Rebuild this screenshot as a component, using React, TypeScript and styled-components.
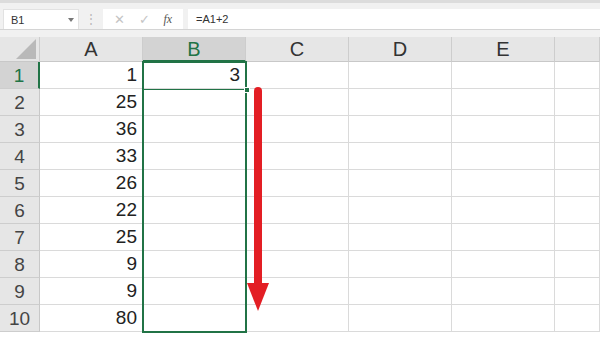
import React from 'react';
import styled, { createGlobalStyle } from 'styled-components';

const GREEN = '#217346';
const GRID = '#dadada';
const COLS = ['A', 'B', 'C', 'D', 'E', ''];
const VALUES = [1, 25, 36, 33, 26, 22, 25, 9, 9, 80];

const GlobalStyle = createGlobalStyle`
  html, body {
    margin: 0;
    padding: 0;
    background: #ffffff;
    overflow: hidden;
  }
  body {
    font-family: 'Liberation Sans', Arial, sans-serif;
  }
`;

const Page = styled.div`
  width: 600px;
  height: 337px;
  overflow: hidden;
  background: #fff;
`;

const Toolbar = styled.div`
  height: 26px;
  display: flex;
  align-items: flex-end;
  padding-left: 3px;
  background: #f1f1f1;
  border-top: 3px solid #dcdcdc;
  border-bottom: 1px solid #d4d4d4;
`;

const NameBox = styled.div`
  width: 76px;
  height: 20px;
  box-sizing: border-box;
  background: #fff;
  border: 1px solid #e2e2e2;
  border-bottom: none;
  display: flex;
  align-items: center;
  justify-content: space-between;
  padding: 0 4px 0 7px;
  font-size: 11px;
  color: #333;
`;

const Caret = styled.span`
  width: 0;
  height: 0;
  border-left: 3px solid transparent;
  border-right: 3px solid transparent;
  border-top: 4px solid #777;
`;

const Grip = styled.div`
  width: 24px;
  height: 20px;
  display: flex;
  align-items: center;
  justify-content: center;
  color: #b8b8b8;
  font-size: 12px;
`;

const FxBox = styled.div`
  width: 80px;
  height: 20px;
  box-sizing: border-box;
  background: #fff;
  display: flex;
  align-items: center;
  justify-content: space-around;
  padding: 0 4px;
  color: #c4c4c4;
  font-size: 13px;
`;

const FxLabel = styled.span`
  font-family: 'Liberation Serif', serif;
  font-style: italic;
  color: #555;
  font-size: 12px;
`;

const FormulaInput = styled.div`
  flex: 1;
  height: 20px;
  margin-left: 5px;
  background: #fff;
  display: flex;
  align-items: center;
  padding-left: 8px;
  font-size: 11px;
  color: #333;
`;

const Sheet = styled.div`
  position: relative;
  display: grid;
  grid-template-columns: 40px repeat(5, 103px) 1fr;
  grid-auto-rows: 27px;
  grid-template-rows: 32px;
`;

const HeadCell = styled.div`
  background: #f1f1f1;
  padding-top: 7px;
  box-sizing: border-box;
  display: flex;
`;

const HeadInner = styled.div<{ $active?: boolean }>`
  flex: 1;
  display: flex;
  align-items: center;
  justify-content: center;
  background: ${(p) => (p.$active ? '#d3d3d3' : '#e6e6e6')};
  border-right: 1px solid #cdcdcd;
  border-bottom: ${(p) => (p.$active ? `2px solid ${GREEN}` : '1px solid #c8c8c8')};
  box-sizing: border-box;
  font-size: 20px;
  color: ${(p) => (p.$active ? GREEN : '#333')};
  padding-top: 1px;
`;

const Corner = styled.div`
  flex: 1;
  position: relative;
  background: #e6e6e6;
  border-right: 1px solid #cdcdcd;
  border-bottom: 1px solid #c8c8c8;
`;

const CornerTriangle = styled.div`
  position: absolute;
  right: 3px;
  bottom: 2px;
  width: 0;
  height: 0;
  border-left: 20px solid transparent;
  border-bottom: 20px solid #b9b9b9;
`;

const RowHead = styled.div<{ $active?: boolean }>`
  background: ${(p) => (p.$active ? '#d3d3d3' : '#e6e6e6')};
  border-bottom: 1px solid #cdcdcd;
  border-right: ${(p) => (p.$active ? `2px solid ${GREEN}` : '1px solid #c8c8c8')};
  box-sizing: border-box;
  display: flex;
  align-items: center;
  justify-content: center;
  font-size: 19px;
  color: ${(p) => (p.$active ? GREEN : '#444')};
  padding-top: 2px;
`;

const Cell = styled.div`
  border-right: 1px solid ${GRID};
  border-bottom: 1px solid ${GRID};
  box-sizing: border-box;
  display: flex;
  align-items: flex-end;
  justify-content: flex-end;
  padding: 0 5px 2px 0;
  font-size: 19px;
  color: #222;
`;

const Selection = styled.div`
  position: absolute;
  left: 142px;
  top: 31px;
  width: 105px;
  height: 272px;
  box-sizing: border-box;
  border: 2px solid ${GREEN};
  pointer-events: none;
`;

const ActiveLine = styled.div`
  position: absolute;
  left: 0;
  right: 0;
  top: 26px;
  height: 1px;
  background: ${GREEN};
`;

const FillHandle = styled.div`
  position: absolute;
  right: -5px;
  top: 24px;
  width: 6px;
  height: 6px;
  background: ${GREEN};
  border: 1px solid #fff;
  box-sizing: border-box;
`;

const Arrow = styled.svg`
  position: absolute;
  left: 246px;
  top: 53px;
  pointer-events: none;
`;

const Toolbars = () => (
  <Toolbar>
    <NameBox>
      B1
      <Caret />
    </NameBox>
    <Grip>⋮</Grip>
    <FxBox>
      <span>✕</span>
      <span>✓</span>
      <FxLabel>fx</FxLabel>
    </FxBox>
    <FormulaInput>=A1+2</FormulaInput>
  </Toolbar>
);

const App = () => {
  return (
    <Page>
      <GlobalStyle />
      <Toolbars />
      <Sheet>
        <HeadCell>
          <Corner>
            <CornerTriangle />
          </Corner>
        </HeadCell>
        {COLS.map((c) => (
          <HeadCell key={c || 'F'}>
            <HeadInner $active={c === 'B'}>{c}</HeadInner>
          </HeadCell>
        ))}
        {VALUES.map((v, i) => (
          <React.Fragment key={i}>
            <RowHead $active={i === 0}>{i + 1}</RowHead>
            <Cell>{v}</Cell>
            <Cell>{i === 0 ? 3 : ''}</Cell>
            <Cell />
            <Cell />
            <Cell />
            <Cell />
          </React.Fragment>
        ))}
        <Selection>
          <ActiveLine />
          <FillHandle />
        </Selection>
        <Arrow width="26" height="232" viewBox="0 0 26 232">
          <path d="M12 8 L12 204" stroke="#e31e24" strokeWidth="8" strokeLinecap="round" />
          <polygon points="1,200 23,200 12,228" fill="#e31e24" />
        </Arrow>
      </Sheet>
    </Page>
  );
};

export default App;
